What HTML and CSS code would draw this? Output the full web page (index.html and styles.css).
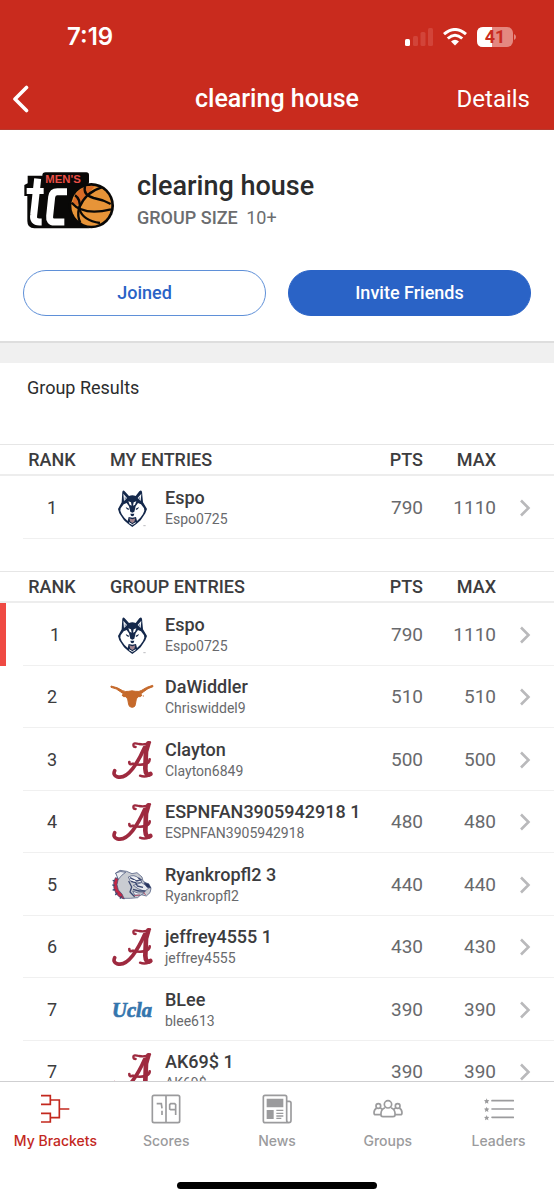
FILE: index.html
```html
<!DOCTYPE html>
<html lang="en">
<head>
<meta charset="utf-8">
<meta name="viewport" content="width=device-width, initial-scale=1">
<title>clearing house</title>
<link rel="stylesheet" href="styles.css">
</head>
<body>
<svg class="sprites" aria-hidden="true">
  <symbol id="chevron" viewBox="0 0 12 20"><path d="M2 2.500 9.500 10 2 17.500" fill="none" stroke="#b9b9bb" stroke-width="2.600"/></symbol>
  <symbol id="husky" viewBox="0 0 132 120">
    <g transform="translate(24 3)">
      <path d="M13 8Q16 2 20 7L33 21Q43 17 53 21L64 7Q69 2 72 8L75 40 87 60 82 73 75 83 68 94 56 104 43 114 30 104 18 94 11 83 4 73 0 60 11 40Z" fill="#14284b"/>
      <path d="M16 14 27 27 18 36ZM70 14 59 27 68 36Z" fill="#f3f5f8"/>
      <path d="M20 23 25 28 20 34ZM66 23 61 28 66 34Z" fill="#8492aa"/>
      <path d="M8 58 17 46 26 42 33 52 37 68 43 71 49 68 53 52 60 42 69 46 78 58 79 65 75 75 67 86 57 96 54 84 43 86 32 84 29 96 19 86 11 75 7 65Z" fill="#fff"/>
      <path d="M31 37 39 40 41 50 35 47ZM55 37 47 40 45 50 51 47Z" fill="#fff"/>
      <path d="M23 54 33 59 32 63 26 60ZM63 54 53 59 54 63 60 60ZM37 74H49L47 80 43 82 39 80Z" fill="#14284b"/>
      <path d="M34 88 43 91 52 88 49 98 43 102 37 98Z" fill="#a3868f"/>
      <path d="M33 101 43 107 53 101" fill="none" stroke="#fff" stroke-width="3"/>
      <path d="M76 110H83" stroke="#9a9aa0" stroke-width="2"/>
    </g>
  </symbol>
  <symbol id="longhorn" viewBox="0 0 132 120">
    <path d="M3 27Q24 31 38 41Q46 45 56 43Q66 40 76 43Q88 45 95 40Q108 30 128 25L129 29Q113 33 101 44Q96 50 88 51L96 54Q94 61 84 59L79 66 76 83Q76 90 66 91Q57 90 56 83L53 66 48 59Q38 61 36 54L44 51Q37 50 31 44Q20 34 3 31Z" fill="#c5692b" stroke="#c5692b" stroke-width="3"/>
    <circle cx="100" cy="57" r="2" fill="#d08655"/>
  </symbol>
  <symbol id="alabama" viewBox="0 0 132 120">
    <g fill="none" stroke="#9e2a3f" stroke-linecap="round" stroke-linejoin="round">
      <path d="M120 7Q106 16 87 12Q70 7 70 14Q70 21 77 21" stroke-width="7"/>
      <path d="M115 10 108 35 106 86Q107 110 121 102" stroke-width="14"/>
      <path d="M104 22Q87 61 68 86Q43 118 21 110Q8 105 14 92" stroke-width="11"/>
      <path d="M58 66Q57 75 69 71Q92 78 111 70Q119 66 119 58" stroke-width="8"/>
      <path d="M90 107Q102 112 117 107" stroke-width="7"/>
    </g>
  </symbol>
  <symbol id="bulldog" viewBox="0 0 132 120">
    <g transform="translate(8 14)" stroke="#3b4871" stroke-width="2" stroke-linejoin="round">
      <path d="M15 22 9 10 22 2 42 5 58 12 73 9 88 22 91 34 108 45 115 57 112 69 101 79 85 75 75 84 53 86 29 86 11 73 4 51 7 31Z" fill="#c9ccd2"/>
      <path d="M8 24 3 38 4 57 10 71 20 82 35 88 28 73 17 61 13 45 17 27Z" fill="#c32846"/>
      <path d="M9 10Q24 2 39 8Q27 15 17 29Z" fill="#eceef2"/>
      <path d="M62 47 87 39 110 54 96 65 76 57Z" fill="#e7e9ee"/>
      <path d="M47 22Q65 12 79 27L88 37 72 40 53 34Z" fill="#f1f2f5"/>
      <path d="M60 64Q75 74 95 69L85 76 66 76Z" fill="#eff0f4"/>
      <path d="M94 39 108 42 115 55 103 53Z" fill="#26335d"/>
      <path d="M52 24 72 34 86 30M55 35 69 39 74 49 91 53M48 34 57 52 52 67 66 81M77 24 87 32M61 59 79 64 98 64" fill="none" stroke-width="4"/>
      <path d="M59 31 69 32 64 36Z" fill="#fff" stroke="none"/>
      <path d="M0 32 6 34M-1 46 6 47M0 61 8 60M8 76 14 69M22 87 27 79" stroke-width="4"/>
      <path d="M65 78 82 76M93 68 99 76" stroke="#b82c49"/>
    </g>
  </symbol>
  <symbol id="ucla" viewBox="0 0 132 120">
    <text x="6" y="81" class="mark-ucla">Ucla</text>
  </symbol>
</svg>

<div class="app">
  <header class="top">
    <div class="status">
      <time class="clock">7:19</time>
      <div class="indicators">
        <svg class="signal" viewBox="0 0 28 18" role="img" aria-label="Signal: one bar"><rect x="0" y="11" width="5" height="7" rx="1.500" fill="#fff"/><g fill="#d24439"><rect x="8" y="8" width="5" height="10" rx="1.500"/><rect x="15.500" y="4" width="5" height="14" rx="1.500"/><rect x="23" width="5" height="18" rx="1.500"/></g></svg>
        <svg class="wifi" viewBox="0 0 24 18" role="img" aria-label="Wi-Fi"><g fill="none" stroke="#fff" stroke-width="3"><path d="M1 6.200Q12-3.200 23 6.200"/><path d="M4.800 10.500Q12 4 19.200 10.500"/></g><path d="M8 13.500Q12 10 16 13.500L12 17.500Z" fill="#fff"/></svg>
        <svg class="battery" viewBox="0 0 40 20" role="img" aria-label="Battery 41 percent"><rect width="36" height="20" rx="6" fill="#e48880"/><path d="M6 0H15V20H6Q0 20 0 14V6Q0 0 6 0Z" fill="#fff"/><path d="M37 7Q39 8 39 10T37 13Z" fill="#e48880"/><text x="18" y="16" text-anchor="middle" class="charge">41</text></svg>
      </div>
    </div>
    <nav class="navbar" aria-label="Page">
      <a class="back" href="#back" aria-label="Back"><svg viewBox="0 0 17 28"><path d="M14.500 2.500 3 14 14.500 25.500" fill="none" stroke="#fff" stroke-width="3.600" stroke-linecap="round" stroke-linejoin="round"/></svg></a>
      <div class="nav-title">clearing house</div>
      <a class="details" href="#details">Details</a>
    </nav>
  </header>

  <main class="content">
    <section class="group">
      <div class="group-head">
        <svg class="group-logo" viewBox="0 0 276 180" role="img" aria-label="Men's Tournament Challenge">
          <path d="M68 4H190Q198 4 198 12V34L160 150 200 172H34Q13 172 13 150V75H4V42L14 37V14H58Q58 4 68 4Z" fill="#090807"/>
          <text x="67" y="35" class="mark-mens">MEN'S</text>
          <g fill="none" stroke="#fff" stroke-width="21" stroke-linejoin="round"><path d="M44 23 32 132Q29 153 49 153H56"/><path d="M11 60H62" stroke-width="18"/><path d="M132 62H103Q88 62 86 78L80 135Q78 153 94 153H124"/></g>
          <circle cx="205" cy="104" r="68" fill="#090807"/>
          <circle cx="205" cy="104" r="60" fill="#e79438"/>
          <path d="M158 70Q180 41 215 46L191 74 164 103 148 95Z" fill="#d86b27"/>
          <g fill="none" stroke="#090807" stroke-width="7"><path d="M186 45Q179 72 212 81Q240 86 263 99"/><path d="M236 49Q188 63 168 111Q162 135 172 155"/><path d="M146 95Q180 135 264 115"/><path d="M156 73Q175 86 169 114Q180 149 231 156"/></g>
        </svg>
        <div class="group-copy">
          <h1>clearing house</h1>
          <p class="group-size"><b>GROUP SIZE</b> <span>10+</span></p>
        </div>
      </div>
      <div class="actions">
        <button type="button" class="pill">Joined</button>
        <button type="button" class="pill pill-solid">Invite Friends</button>
      </div>
    </section>

    <section class="results">
      <h2>Group Results</h2>
      <table class="entries">
        <thead><tr><th class="rank" scope="col">RANK</th><th class="team" scope="col">MY ENTRIES</th><th class="pts" scope="col">PTS</th><th class="max" scope="col">MAX</th><th class="go"></th></tr></thead>
        <tbody>
          <tr><td class="rank">1</td><td class="team"><div class="entry"><svg class="logo"><use href="#husky"/></svg><div><strong>Espo</strong><small>Espo0725</small></div></div></td><td class="pts">790</td><td class="max">1110</td><td class="go"><a href="#espo" aria-label="Open Espo"><svg><use href="#chevron"/></svg></a></td></tr>
        </tbody>
      </table>
      <table class="entries">
        <thead><tr><th class="rank" scope="col">RANK</th><th class="team" scope="col">GROUP ENTRIES</th><th class="pts" scope="col">PTS</th><th class="max" scope="col">MAX</th><th class="go"></th></tr></thead>
        <tbody>
          <tr class="mine"><td class="rank">1</td><td class="team"><div class="entry"><svg class="logo"><use href="#husky"/></svg><div><strong>Espo</strong><small>Espo0725</small></div></div></td><td class="pts">790</td><td class="max">1110</td><td class="go"><a href="#espo" aria-label="Open Espo"><svg><use href="#chevron"/></svg></a></td></tr>
          <tr><td class="rank">2</td><td class="team"><div class="entry"><svg class="logo"><use href="#longhorn"/></svg><div><strong>DaWiddler</strong><small>Chriswiddel9</small></div></div></td><td class="pts">510</td><td class="max">510</td><td class="go"><a href="#dawiddler" aria-label="Open DaWiddler"><svg><use href="#chevron"/></svg></a></td></tr>
          <tr><td class="rank">3</td><td class="team"><div class="entry"><svg class="logo"><use href="#alabama"/></svg><div><strong>Clayton</strong><small>Clayton6849</small></div></div></td><td class="pts">500</td><td class="max">500</td><td class="go"><a href="#clayton" aria-label="Open Clayton"><svg><use href="#chevron"/></svg></a></td></tr>
          <tr><td class="rank">4</td><td class="team"><div class="entry"><svg class="logo"><use href="#alabama"/></svg><div><strong>ESPNFAN3905942918 1</strong><small>ESPNFAN3905942918</small></div></div></td><td class="pts">480</td><td class="max">480</td><td class="go"><a href="#espnfan" aria-label="Open ESPNFAN3905942918 1"><svg><use href="#chevron"/></svg></a></td></tr>
          <tr><td class="rank">5</td><td class="team"><div class="entry"><svg class="logo"><use href="#bulldog"/></svg><div><strong>Ryankropfl2 3</strong><small>Ryankropfl2</small></div></div></td><td class="pts">440</td><td class="max">440</td><td class="go"><a href="#ryankropfl2" aria-label="Open Ryankropfl2 3"><svg><use href="#chevron"/></svg></a></td></tr>
          <tr><td class="rank">6</td><td class="team"><div class="entry"><svg class="logo"><use href="#alabama"/></svg><div><strong>jeffrey4555 1</strong><small>jeffrey4555</small></div></div></td><td class="pts">430</td><td class="max">430</td><td class="go"><a href="#jeffrey4555" aria-label="Open jeffrey4555 1"><svg><use href="#chevron"/></svg></a></td></tr>
          <tr><td class="rank">7</td><td class="team"><div class="entry"><svg class="logo"><use href="#ucla"/></svg><div><strong>BLee</strong><small>blee613</small></div></div></td><td class="pts">390</td><td class="max">390</td><td class="go"><a href="#blee" aria-label="Open BLee"><svg><use href="#chevron"/></svg></a></td></tr>
          <tr><td class="rank">7</td><td class="team"><div class="entry"><svg class="logo"><use href="#alabama"/></svg><div><strong>AK69$ 1</strong><small>AK69$</small></div></div></td><td class="pts">390</td><td class="max">390</td><td class="go"><a href="#ak69" aria-label="Open AK69$ 1"><svg><use href="#chevron"/></svg></a></td></tr>
        </tbody>
      </table>
    </section>
  </main>

  <footer class="bottom">
    <nav class="tabs" aria-label="Sections">
      <a class="tab active" href="#brackets" aria-current="page"><svg viewBox="0 0 90 90"><path d="M3 5H31V31H3M3 58H31V84H3M31 18H58V71H31M58 45H88" fill="none" stroke="currentColor" stroke-width="5"/></svg><span>My Brackets</span></a>
      <a class="tab" href="#scores"><svg viewBox="0 0 90 90"><g fill="none" stroke="currentColor" stroke-width="5"><rect x="4" y="4" width="82" height="82" rx="5"/><path d="M45 4V86"/><path d="M17 29H31L33 43M33 50V63M74 63V32L71 29H59L56 32V45L59 47H74" stroke-width="5"/></g></svg><span>Scores</span></a>
      <a class="tab" href="#news"><svg viewBox="0 0 90 90"><g fill="none" stroke="currentColor" stroke-width="5"><path d="M74 22H82Q87 22 87 27V79Q87 86 80 86H10Q4 86 4 80V9Q4 4 9 4H69Q74 4 74 9V79Q74 86 81 86"/><path d="M43 49H64M43 58H64M43 66H64M43 73H58" stroke-width="4"/></g><path d="M14 14H64V40H14ZM14 48H35V75H14Z" fill="currentColor"/></svg><span>News</span></a>
      <a class="tab" href="#groups"><svg viewBox="0 0 90 90"><g fill="none" stroke="currentColor" stroke-width="5" stroke-linejoin="round"><circle cx="45" cy="31" r="11"/><path d="M36 41Q25 45 24 57V63Q24 68 30 68H60Q66 68 66 63V57Q65 45 54 41"/><circle cx="16" cy="36" r="7"/><path d="M11 42Q3 47 3 56Q3 62 8 62H24M22 42 28 46"/><circle cx="74" cy="36" r="7"/><path d="M79 42Q87 47 87 56Q87 62 82 62H66M68 42 62 46"/></g></svg><span>Groups</span></a>
      <a class="tab" href="#leaders"><svg viewBox="0 0 90 90"><path d="M24 20H88M24 45H88M24 70H88" stroke="currentColor" stroke-width="5" stroke-linecap="round"/><g fill="currentColor"><path id="star" d="m8 13 2 5 6 1-4 4 1 6-5-3-5 3 1-6-4-4 6-1z"/><use href="#star" y="25"/><use href="#star" y="50"/></g></svg><span>Leaders</span></a>
    </nav>
    <div class="home-bar"></div>
  </footer>
</div>
</body>
</html>
```
FILE: styles.css
```css
* { box-sizing: border-box; }
body { margin: 0; background: #fff; color: #3c3c3e; font-family: Roboto, "Liberation Sans", sans-serif; }
a { color: inherit; text-decoration: none; }
svg { display: block; }
.sprites { display: none; }
.app { display: flex; flex-direction: column; height: 100vh; }

.top { flex: none; background: #c92b1e; color: #fff; border-bottom: 1px solid #b73a30; }
.status { display: flex; justify-content: space-between; align-items: center; height: 68px; padding: 6px 37px 0 67px; }
.clock { font: 600 24px/28px Inter, sans-serif; }
.indicators { display: flex; align-items: center; gap: 10px; }
.signal { width: 28px; height: 18px; }
.wifi { width: 24px; height: 18px; }
.battery { width: 40px; height: 20px; }
.charge { font: 700 18px Roboto, sans-serif; fill: #c92b1e; }
.navbar { display: grid; grid-template-columns: 1fr auto 1fr; align-items: center; height: 61px; padding: 0 24px; }
.back { margin-left: -12px; }
.back svg { width: 17px; height: 28px; }
.nav-title { font-size: 25px; line-height: 32px; font-weight: 500; }
.details { justify-self: end; font-size: 24px; line-height: 32px; }

.content { flex: 1; min-height: 0; overflow-y: auto; scrollbar-width: none; }
.group { padding: 40px 23px 25px; border-bottom: 2px solid #dedede; }
.group-head { display: flex; align-items: center; gap: 22px; }
.group-logo { flex: none; width: 92px; height: 60px; }
.group-copy { display: flex; flex-direction: column; gap: 2px; }
h1, h2, p { margin: 0; }
h1 { font-size: 27px; line-height: 32px; font-weight: 500; color: #2b2c2d; }
.group-size { font-size: 18px; line-height: 28px; color: #6c6d6f; }
.group-size b { font-weight: 500; margin-right: 4px; }
.actions { display: grid; grid-template-columns: 1fr 1fr; gap: 22px; margin-top: 38px; }
.pill { height: 46px; border: 1px solid #5f90d8; border-radius: 23px; background: #fff; color: #2a63c6; font: 500 18px/24px Roboto, sans-serif; }
.pill-solid { background: #2a63c6; border-color: #2a63c6; color: #fff; }

.results { border-top: 20px solid #f0f0f0; }
h2 { padding: 11px 27px 12px; margin-bottom: 30px; font-size: 18px; line-height: 28px; font-weight: 400; color: #2b2c2d; }
.entries { width: 100%; table-layout: fixed; border-collapse: separate; border-spacing: 0; margin-bottom: 32px; }
th { height: 32px; padding: 0; border-top: 1px solid #e6e6e6; border-bottom: 2px solid #ededed; font-size: 18px; line-height: 24px; font-weight: 500; text-align: left; }
td { height: 63px; padding: 0; font-size: 18px; line-height: 24px; color: #68696c; }
tbody tr { background: linear-gradient(#f0f0f0, #f0f0f0) 23px 100% / 100% 1px no-repeat; }
tbody tr:nth-child(even) td { height: 62px; }
.rank { width: 104px; text-align: center; }
td.rank { color: #3c3c3e; }
.mine .rank { border-left: 6px solid #ef4a43; }
th.team { padding-left: 6px; }
.pts { width: 60px; text-align: right; }
.max { width: 73px; text-align: right; }
td.pts, td.max { font-size: 19px; }
.go { width: 58px; }
.go a { display: block; padding-left: 23px; }
.go svg { width: 12px; height: 20px; }
.entry { display: flex; align-items: center; gap: 11px; padding-left: 6px; }
.logo { flex: none; width: 44px; height: 40px; }
strong, small { display: block; white-space: nowrap; }
strong { font-size: 18px; line-height: 22px; font-weight: 500; color: #3c3c3e; }
small { font-size: 14px; line-height: 20px; }

.bottom { flex: none; padding-bottom: 11px; border-top: 1px solid #cfcfd1; background: #fff; }
.tabs { display: grid; grid-template-columns: repeat(5, 1fr); padding-top: 12px; }
.tab { display: flex; flex-direction: column; align-items: center; gap: 7px; color: #9b9b9d; font: 500 14px/20px Inter, sans-serif; }
.tab svg { width: 30px; height: 30px; }
.active { color: #c3281e; }
.home-bar { width: 36%; height: 7px; margin: 31px auto 0; border-radius: 4px; background: #000; }

.mark-ucla { font: italic 700 62px "Liberation Serif", serif; fill: #3475ad; stroke: #3475ad; stroke-width: 2px; }
.mark-mens { font: 700 34px "Liberation Sans", sans-serif; fill: #e94e45; }
```
